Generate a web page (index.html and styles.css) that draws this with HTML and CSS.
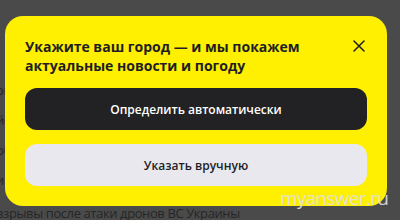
FILE: index.html
```html
<!DOCTYPE html>
<html lang="ru">
<head>
<meta charset="utf-8">
<link rel="stylesheet" href="styles.css">
</head>
<body>
<div class="page">
  <div class="news">
    <p class="news-line">опубликовано сегодня утром</p>
    <p class="news-line">йодной сетке региона</p>
    <p class="news-line">области сообщили о</p>
    <p class="news-line">и прогремели</p>
    <p class="news-line last">взрывы после атаки дронов ВС Украины</p>
  </div>
  <div class="modal">
    <div class="modal-head">
      <h2 class="modal-title">Укажите ваш город — и мы покажем актуальные новости и погоду</h2>
      <button class="close" aria-label="Закрыть">
        <svg width="12" height="12" viewBox="0 0 12 12"><path d="M1 1L11 11M11 1L1 11" stroke="#1e1e1e" stroke-width="1.5" stroke-linecap="round"/></svg>
      </button>
    </div>
    <div class="actions">
      <button class="btn btn-dark">Определить автоматически</button>
      <button class="btn btn-light">Указать вручную</button>
    </div>
  </div>
  <div class="watermark">myanswer.ru</div>
</div>
</body>
</html>
```
FILE: styles.css
```css
html, body {
  margin: 0;
  padding: 0;
}
body {
  background: #4a4a4a;
  font-family: "Open Sans", "Noto Sans", sans-serif;
}
.page {
  position: relative;
  width: 400px;
  height: 220px;
  overflow: hidden;
  background: #4a4a4a;
}
.news {
  margin-left: -4px;
  padding-top: 78px;
}
.news-line {
  margin: 0;
  height: 30px;
  line-height: 24px;
  font-size: 13px;
  letter-spacing: -0.4px;
  color: #262626;
  white-space: nowrap;
}
.news-line.last {
  margin-top: 3px;
}
.modal {
  position: absolute;
  left: 5px;
  top: 16px;
  width: 382px;
  height: 190px;
  box-sizing: border-box;
  padding: 20px;
  background: #ffef00;
  border-radius: 18px;
  display: flex;
  flex-direction: column;
}
.modal-head {
  display: flex;
  align-items: flex-start;
  justify-content: space-between;
  height: 52px;
}
.modal-title {
  margin: 0;
  width: 300px;
  font-size: 14px;
  line-height: 19px;
  font-weight: 700;
  color: #1e1e24;
  padding-top: 1px;
}
.close {
  border: 0;
  background: none;
  padding: 0;
  margin: 4px 2px 0 0;
  width: 12px;
  height: 12px;
  display: flex;
}
.actions {
  display: flex;
  flex-direction: column;
  gap: 14px;
}
.btn {
  height: 42px;
  border: 0;
  border-radius: 12px;
  font-family: "Open Sans", "Noto Sans", sans-serif;
  font-size: 12px;
  font-weight: 600;
}
.btn-dark {
  background: #222224;
  color: #ffffff;
}
.btn-light {
  background: #e8e8ee;
  color: #1e1e24;
}
.watermark {
  position: absolute;
  left: 280px;
  top: 185px;
  font-family: "Open Sans", "Noto Sans", sans-serif;
  font-size: 19px;
  letter-spacing: -0.7px;
  color: rgba(225, 225, 225, 0.92);
}
```
